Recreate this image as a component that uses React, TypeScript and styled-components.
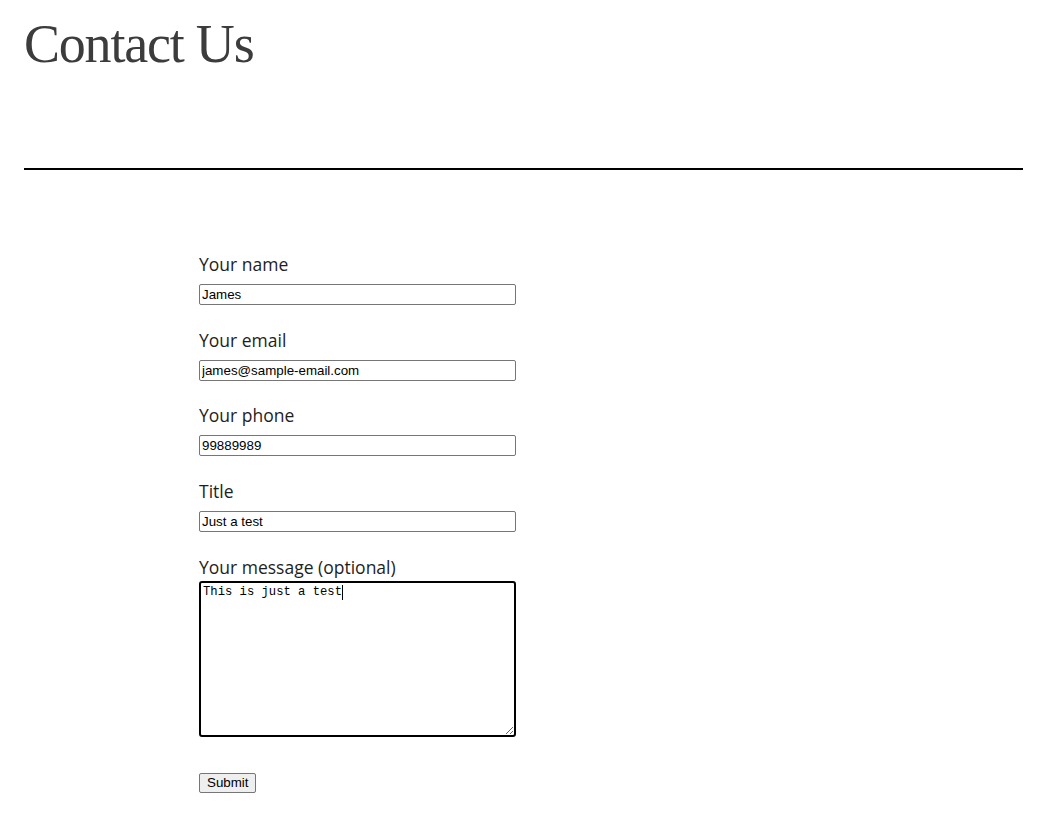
import React from 'react';
import { createGlobalStyle, styled } from 'styled-components';

const GlobalStyle = createGlobalStyle`
  html, body {
    margin: 0;
    padding: 0;
    background: #ffffff;
  }
  body {
    font-family: "Open Sans", "Noto Sans", sans-serif;
    color: #1e1e1e;
  }
`;

const Page = styled.div`
  padding: 0 20px 40px 24px;
`;

const Header = styled.header`
  display: flex;
  flex-direction: column;
`;

const Title = styled.h1`
  margin: 12px 0 0 0;
  font-family: "Liberation Serif", "DejaVu Serif", serif;
  font-weight: 400;
  font-size: 54px;
  line-height: 64px;
  letter-spacing: -1.2px;
  color: #3c3c3c;
`;

const Rule = styled.hr`
  margin: 92px 0 0 0;
  border: 0;
  height: 2px;
  background: #000000;
`;

const Form = styled.form`
  display: flex;
  flex-direction: column;
  align-items: flex-start;
  margin: 82px 0 0 175px;
`;

const Field = styled.div<{ $after?: number; $labelGap?: number }>`
  display: flex;
  flex-direction: column;
  gap: ${(p) => p.$labelGap ?? 8}px;
  margin-bottom: ${(p) => p.$after ?? 22.7}px;
`;

const Label = styled.label`
  font-size: 17.5px;
  line-height: 24px;
  color: #1e1e1e;
`;

const TextInput = styled.input`
  box-sizing: border-box;
  width: 317px;
  height: 21px;
  margin: 0;
  padding: 1px 2px;
  border: 1px solid #767676;
  border-radius: 2px;
  font-family: "Liberation Sans", Arial, sans-serif;
  font-size: 13.33px;
  color: #000000;
  background: #ffffff;
  outline: none;
`;

const AreaWrap = styled.div`
  position: relative;
  width: 317px;
  height: 156px;
`;

const TextArea = styled.textarea`
  box-sizing: border-box;
  display: block;
  width: 317px;
  height: 156px;
  margin: 0;
  padding: 1px 2px 2px 2px;
  border: 2px solid #000000;
  border-radius: 3px;
  font-family: "Liberation Mono", "DejaVu Sans Mono", monospace;
  font-size: 12.2px;
  line-height: 16px;
  color: #000000;
  background: #ffffff;
  outline: none;
`;

const Caret = styled.span<{ $chars: number }>`
  position: absolute;
  top: 4px;
  left: calc(4px + ${(p) => p.$chars}ch);
  width: 1px;
  height: 15px;
  background: #000000;
  font-family: "Liberation Mono", "DejaVu Sans Mono", monospace;
  font-size: 12.2px;
`;

const SubmitButton = styled.button`
  box-sizing: border-box;
  height: 20px;
  margin: 0;
  padding: 0 7px;
  border: 1px solid #767676;
  border-radius: 2px;
  background: #efefef;
  font-family: "Liberation Sans", Arial, sans-serif;
  font-size: 13.33px;
  color: #000000;
  cursor: pointer;
`;

const fields = [
  { id: 'name', label: 'Your name', value: 'James' },
  { id: 'email', label: 'Your email', value: 'james@sample-email.com' },
  { id: 'phone', label: 'Your phone', value: '99889989' },
  { id: 'title', label: 'Title', value: 'Just a test' },
];

const message = 'This is just a test';

export default function App() {
  return (
    <Page>
      <GlobalStyle />
      <Header>
        <Title>Contact Us</Title>
        <Rule />
      </Header>
      <Form onSubmit={(e) => e.preventDefault()}>
        {fields.map((f) => (
          <Field key={f.id}>
            <Label htmlFor={f.id}>{f.label}</Label>
            <TextInput id={f.id} type="text" defaultValue={f.value} />
          </Field>
        ))}
        <Field $labelGap={2} $after={36}>
          <Label htmlFor="message">Your message (optional)</Label>
          <AreaWrap>
            <TextArea id="message" defaultValue={message} />
            <Caret $chars={message.length} />
          </AreaWrap>
        </Field>
        <SubmitButton type="submit">Submit</SubmitButton>
      </Form>
    </Page>
  );
}
